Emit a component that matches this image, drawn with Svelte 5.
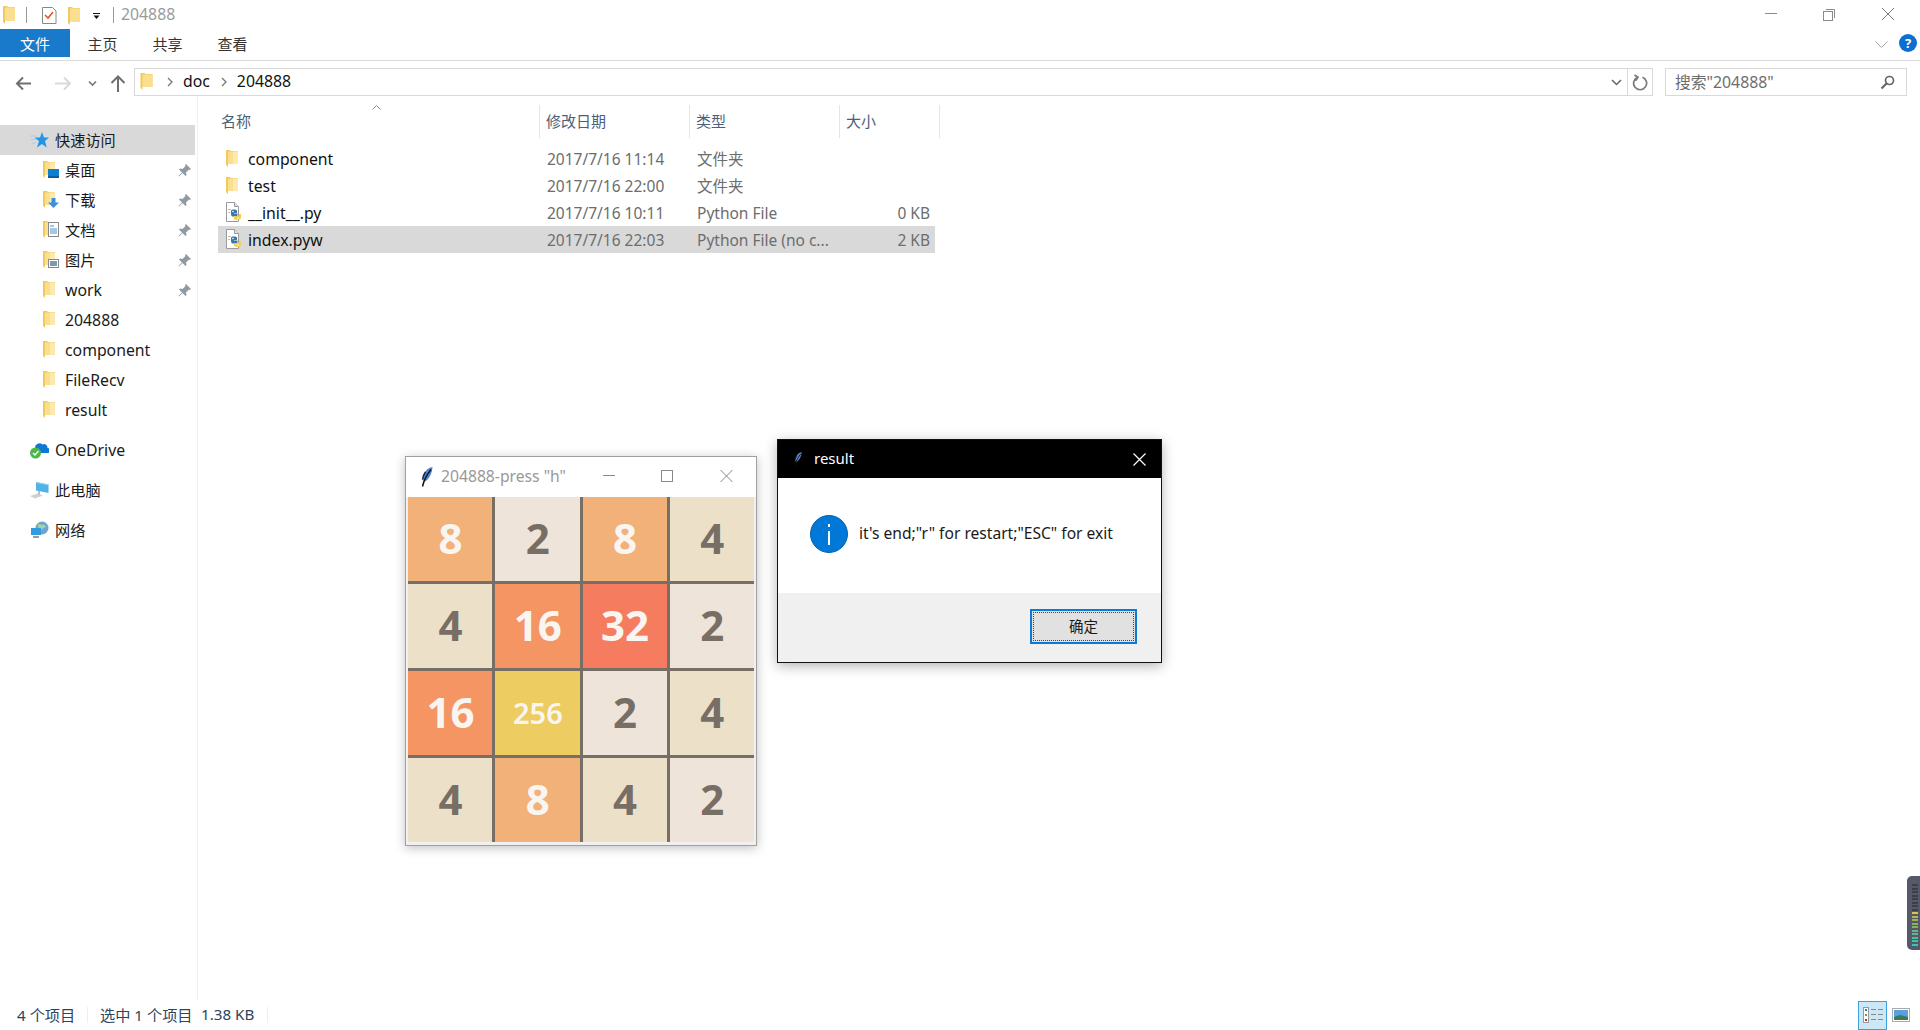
<script>
  const board = [8,2,8,4, 4,16,32,2, 16,256,2,4, 4,8,4,2];
  const files = [
    { name: 'component', date: '2017/7/16 11:14', type: '文件夹', size: '', kind: 'folder' },
    { name: 'test', date: '2017/7/16 22:00', type: '文件夹', size: '', kind: 'folder' },
    { name: '__init__.py', date: '2017/7/16 10:11', type: 'Python File', size: '0 KB', kind: 'py' },
    { name: 'index.pyw', date: '2017/7/16 22:03', type: 'Python File (no c...', size: '2 KB', kind: 'py', selected: true }
  ];
  const quick = [
    { name: '桌面', overlay: 'desk', pin: true, zh: true },
    { name: '下载', overlay: 'down', pin: true, zh: true },
    { name: '文档', overlay: 'doc', pin: true, zh: true },
    { name: '图片', overlay: 'pic', pin: true, zh: true },
    { name: 'work', pin: true },
    { name: '204888' },
    { name: 'component' },
    { name: 'FileRecv' },
    { name: 'result' }
  ];
</script>

{#snippet folder()}
  <svg class="folder" width="12" height="18" viewBox="0 0 12 18">
    <path d="M0 0h4l1 1h7v13H2v3l-2-2z" fill="#f2c95c"/>
    <path d="M2 1.500h10V14H2z" fill="#fbdf90"/>
    <path d="M7 1.500h5V14H7z" fill="#fde8ae"/>
  </svg>
{/snippet}

{#snippet feather(w, h)}
  <svg width={w} height={h} viewBox="0 0 12 20">
    <path d="M11.500 0C6 .5 2 6 1.500 13l2.500 1.500C8 12 11 7 11.500 0z" fill="#4f86cc"/>
    <path d="M9 3C6.500 6 5 9 4 12" stroke="#a9c8ec" stroke-width="1" fill="none"/>
    <path d="M10 2.500C7 6 3.500 11 1.500 19.500" stroke="#111" stroke-width="1.500" fill="none"/>
    <path d="M1.500 12.500C2 9 3 7 4.500 5" stroke="#16264a" stroke-width="1.500" fill="none"/>
  </svg>
{/snippet}

{#snippet pyfile()}
  <svg class="fileicon" width="16" height="21" viewBox="0 0 16 21">
    <path d="M.5.500h8l4 4v15H.5z" fill="#fff" stroke="#9a9a9a"/>
    <path d="M8.500.500v4h4" fill="#e6e6e6" stroke="#9a9a9a"/>
    <rect x="2" y="7" width="3" height="1" fill="#bbb"/><rect x="2" y="10" width="2" height="1" fill="#bbb"/>
    <path d="M5 12V9c0-1 1-1.500 3-1.500s3 .5 3 1.500v2H8v.5h3.500V13c0 1-1 1.500-2 1.500H7c-1 0-2-.5-2-2.500z" fill="#3b77a8"/>
    <path d="M15 12v3c0 2-1 3-3.500 3S8 17 8 16v-2h3.500c1 0 1.500-.5 1.500-2z" fill="#f7cf47"/>
    <circle cx="12" cy="16" r=".8" fill="#fff"/><circle cx="7" cy="9.500" r=".8" fill="#fff"/>
  </svg>
{/snippet}

{#snippet pin()}
  <svg class="pin" width="13" height="13" viewBox="0 0 13 13">
    <path d="M8 0l5 5-1 1-1-.5L8 8.500 8.500 11 7.500 12 4.500 9 1 12.500.5 12 4 8.500 1 5.500l1-1 2.500.5 3-3L7 1z" fill="#8f9aa3"/>
  </svg>
{/snippet}

<div class="explorer">
  <header class="titlebar">
    <svg class="qat" width="105" height="29" viewBox="0 0 105 29">
      <path d="M3 6h4l1 1h7v14H5v3l-2-2z" fill="#f2c95c"/><rect x="5" y="7.500" width="10" height="13.500" fill="#fbdf90"/>
      <rect x="26" y="7" width="1" height="16" fill="#999"/>
      <path d="M42.500 7.500h10l3.500 3.500v12.500H42.500z" fill="#fff" stroke="#888"/>
      <path d="M45 15l3 3 5-6" stroke="#e8541e" stroke-width="1.600" fill="none"/>
      <path d="M68 7h4l1 1h7v14H70v3l-2-2z" fill="#f2c95c"/><rect x="70" y="8.500" width="10" height="13.500" fill="#fbdf90"/>
      <rect x="93" y="13" width="7" height="1" fill="#111"/><path d="M93.500 15.500h6L96.500 19z" fill="#111"/>
    </svg>
    <span class="sep"></span>
    <span class="wintitle">204888</span>
    <svg class="winctl" width="136" height="29" viewBox="0 0 136 29">
      <rect x="6" y="13" width="12" height="1" fill="#8a8a8a"/>
      <rect x="64.500" y="11.500" width="9" height="9" fill="none" stroke="#8a8a8a"/>
      <path d="M67 9.500h8.500V18" fill="none" stroke="#8a8a8a"/>
      <path d="M123 8l12 12M135 8l-12 12" stroke="#7a7a7a" stroke-width="1" fill="none"/>
    </svg>
  </header>

  <nav class="tabs">
    <span class="tab file">文件</span>
    <span class="tab">主页</span>
    <span class="tab">共享</span>
    <span class="tab">查看</span>
    <svg class="collapse" width="13" height="8" viewBox="0 0 13 8"><path d="M.5.500l6 6 6-6" stroke="#a5a5a5" fill="none"/></svg>
    <span class="help">?</span>
  </nav>

  <div class="addrrow">
    <svg class="navbtns" width="134" height="28" viewBox="0 0 134 28">
      <path d="M31 15.500H18M23 9.500l-6 6 6 6" stroke="#6f6f6f" stroke-width="2" fill="none"/>
      <path d="M55 15.500h14M64 9.500l6 6-6 6" stroke="#d9d9d9" stroke-width="2" fill="none"/>
      <path d="M89 13.500l3.500 3.500 3.500-3.500" stroke="#777" stroke-width="1.600" fill="none"/>
      <path d="M118 24V9M111.500 15l6.500-6.500 6.500 6.500" stroke="#6f6f6f" stroke-width="2" fill="none"/>
    </svg>
    <div class="addr">
      <svg class="addrfolder" width="13" height="18" viewBox="0 0 12 18"><path d="M0 0h4l1 1h7v13H2v3l-2-2z" fill="#f2c95c"/><path d="M2 1.500h10V14H2z" fill="#fbdf90"/></svg>
      <svg class="crumb first" width="6" height="10" viewBox="0 0 6 10"><path d="M1 1l4 4-4 4" stroke="#777" stroke-width="1.300" fill="none"/></svg>
      <span class="crumbtext">doc</span>
      <svg class="crumb" width="6" height="10" viewBox="0 0 6 10"><path d="M1 1l4 4-4 4" stroke="#777" stroke-width="1.300" fill="none"/></svg>
      <span class="crumbtext">204888</span>
      <svg class="drop" width="11" height="7" viewBox="0 0 11 7"><path d="M1 1l4.500 4.500L10 1" stroke="#666" stroke-width="1.500" fill="none"/></svg>
      <span class="refresh">
        <svg width="16" height="17" viewBox="0 0 16 17"><path d="M5.500 3.300a6.500 6.500 0 1 0 5-.1M2.500 1l3.500 2.300-2.500 3.500" stroke="#7a7a7a" stroke-width="1.700" fill="none"/></svg>
      </span>
    </div>
    <div class="search">
      <span class="crumbtext">搜索"204888"</span>
      <svg width="15" height="15" viewBox="0 0 15 15"><circle cx="9.500" cy="5.500" r="4" stroke="#666" stroke-width="1.700" fill="none"/><path d="M6.500 8.500L1.500 13.500" stroke="#666" stroke-width="2.200"/></svg>
    </div>
  </div>

  <div class="body">
    <aside class="sidebar">
      <div class="tree top sel">
        <svg width="19" height="17" viewBox="0 0 19 17"><path d="M12 0l2 5.500h5l-4 3.500 1.700 6.500L12 12l-5 3.500L9 9 4.500 5.500H10z" fill="#2296e6"/><path d="M0 4h6M1 7.500h5M2 11h4" stroke="#9fd0f2"/></svg>
        <span class="ttext">快速访问</span>
      </div>
      {#each quick as q}
        <div class="tree sub">
          <span class="ficon">
            {@render folder()}
            {#if q.overlay === 'desk'}
              <svg class="ov" width="11" height="9" viewBox="0 0 11 9"><rect width="11" height="9" fill="#0e7fd0"/><rect y="7" width="11" height="2" fill="#0a5ea0"/></svg>
            {:else if q.overlay === 'down'}
              <svg class="ov" width="11" height="10" viewBox="0 0 11 10"><path d="M3.500 0h4v4.500H11L5.500 10 0 4.500h3.500z" fill="#3d8fdc"/></svg>
            {:else if q.overlay === 'doc'}
              <svg class="ov doc" width="11" height="15" viewBox="0 0 11 15"><rect x=".5" y=".5" width="10" height="14" fill="#fff" stroke="#888"/><path d="M2 4h4M2 7h7M2 9h7M2 11h7" stroke="#4a90c8"/></svg>
            {:else if q.overlay === 'pic'}
              <svg class="ov" width="11" height="9" viewBox="0 0 11 9"><rect x=".5" y=".5" width="10" height="8" fill="#fff" stroke="#888"/><rect x="2" y="2" width="7" height="5" fill="#7b9bb5"/></svg>
            {/if}
          </span>
          <span class="tname" class:zh={q.zh}>{q.name}</span>
          {#if q.pin}{@render pin()}{/if}
        </div>
      {/each}
      <div class="tree top group">
        <svg width="19" height="18" viewBox="0 0 19 18"><path d="M5 7a4.500 4.500 0 0 1 7.500-3.500 3.500 3.500 0 0 1 5 3.500 2.500 2.500 0 0 1 0 5H7z" fill="#0f78d4"/><circle cx="5.500" cy="12" r="5.500" fill="#4cb848"/><path d="M3 12l2 2 3.500-4" stroke="#fff" stroke-width="1.300" fill="none"/></svg>
        <span class="latin">OneDrive</span>
      </div>
      <div class="tree top group">
        <svg width="19" height="18" viewBox="0 0 19 18"><path d="M6 1l12.500 2.500v8.500L6 9.500z" fill="#4fb3ea"/><path d="M6 1l12.500 2.500v1L6 2z" fill="#8ccff2"/><path d="M0 15l8-2.500 5 2-8 3z" fill="#d0d0d0"/><path d="M9 10v3.500" stroke="#aaa" stroke-width="1.500"/></svg>
        <span class="ttext">此电脑</span>
      </div>
      <div class="tree top group">
        <svg width="19" height="18" viewBox="0 0 19 18"><circle cx="12" cy="7" r="6.500" fill="#6ba6cf"/><path d="M8 3c3 1 7 0 8 2-2 3-5 2-5 5-2 0-3-4-3-7z" fill="#a7d3a0"/><rect x="1" y="7" width="10" height="7" fill="#2f9be0"/><path d="M3 16h6" stroke="#9a9a9a" stroke-width="2"/></svg>
        <span class="ttext">网络</span>
      </div>
    </aside>

    <main class="main">
      <div class="colhead">
        <svg class="sort" width="9" height="5" viewBox="0 0 9 5"><path d="M.5 4.500l4-4 4 4" stroke="#8a8a8a" fill="none"/></svg>
        <span class="hname">名称</span>
        <span>修改日期</span>
        <span>类型</span>
        <span class="hlast">大小</span>
      </div>
      {#each files as f}
        <div class="row" class:selected={f.selected}>
          <span class="name">
            {#if f.kind === 'folder'}
              <span class="rowfolder">{@render folder()}</span>
            {:else}
              {@render pyfile()}
            {/if}
            {f.name}
          </span>
          <span class="meta">{f.date}</span>
          <span class="meta">{f.type}</span>
          <span class="meta size">{f.size}</span>
        </div>
      {/each}
    </main>
  </div>

  <footer class="status">
    <span class="count st">4 个项目</span>
    <span class="vsep"></span>
    <span class="picked st">选中 1 个项目</span>
    <span class="bytes st">1.38 KB</span>
    <span class="vsep"></span>
    <span class="viewbtn active">
      <svg width="20" height="16" viewBox="0 0 20 16">
        <rect x=".5" y=".5" width="5" height="15" fill="#fff" stroke="#999"/>
        <rect x="2" y="2" width="2" height="2" fill="#3d7ea6"/><rect x="2" y="7" width="2" height="2" fill="#a0892c"/><rect x="2" y="12" width="2" height="2" fill="#b5321f"/>
        <path d="M8 2.500h5M15 2.500h5M8 7.500h5M15 7.500h5M8 12.500h5M15 12.500h5" stroke="#888"/>
      </svg>
    </span>
    <span class="viewbtn">
      <svg width="18" height="14" viewBox="0 0 18 14"><rect x=".5" y=".5" width="17" height="13" fill="#fff" stroke="#aaa"/><rect x="2" y="2" width="14" height="10" fill="#5aa0e0"/><path d="M2 9l6-2 8 2v3H2z" fill="#3f7a58"/></svg>
    </span>
  </footer>
</div>

<section class="game">
  <div class="gtitle">
    <span class="gicon">{@render feather(12, 20)}</span>
    <span class="gname">204888-press "h"</span>
    <svg class="gctl" width="128" height="14" viewBox="0 0 128 14">
      <rect x="-1" y="6" width="12" height="1" fill="#888"/>
      <rect x="57.500" y="1.500" width="11" height="11" fill="none" stroke="#888"/>
      <path d="M116.500 1l12 12M128.500 1l-12 12" stroke="#888" fill="none"/>
    </svg>
  </div>
  <div class="board">
    {#each board as n}
      <div class="cell v{n}">{n}</div>
    {/each}
  </div>
</section>

<section class="dialog">
  <div class="dtitle">
    <span class="dicon">{@render feather(8, 14)}</span>
    <span class="dname">result</span>
    <svg class="dclose" width="13" height="13" viewBox="0 0 13 13"><path d="M.5.500l12 12M12.500.500l-12 12" stroke="#fff" stroke-width="1.200"/></svg>
  </div>
  <div class="dbody">
    <svg width="38" height="38" viewBox="0 0 38 38"><circle cx="19" cy="19" r="18.500" fill="#0078d7" stroke="#0062b0"/><rect x="18" y="16" width="2" height="14" fill="#fff"/><rect x="18" y="9" width="2" height="3" fill="#fff"/></svg>
    <span class="dmsg">it's end;"r" for restart;"ESC" for exit</span>
  </div>
  <div class="dfoot"><span class="okbtn"><span class="okin">确定</span></span></div>
</section>

<div class="meter">
  {#each ['#3b4048','#3b4048','#3b4048','#3b4048','#3b4048','#3b4048','#3b4048','#3b4048','#d6c83f','#b9b552','#a5ad55','#8fae62','#7cb36e','#68b878','#56bd88','#48c096','#3fc4a4','#3ac8ae'] as c}
    <i style="background:{c}"></i>
  {/each}
</div>

<style>
  :global(body) { margin: 0; background: #fff; overflow: hidden; }
  :global(#app) { font-family: "Noto Sans", "Noto Sans CJK SC", sans-serif; font-size: 15px; color: #1a1a1a; }
  svg { display: block; flex: none; }

  .explorer { height: 1030px; display: flex; flex-direction: column; background: #fff; }

  .titlebar { height: 29px; display: flex; align-items: center; flex: none; }
  .qat { margin-right: 8px; }
  .sep { width: 1px; height: 16px; background: #999; margin-right: 7px; }
  .wintitle { color: #9a9a9a; flex: 1; font-size: 15.800px; margin-bottom: 2px; }
  .winctl { margin-right: 25px; }

  .tabs { height: 31px; flex: none; display: flex; align-items: flex-start; border-bottom: 1px solid #dadada; }
  .tab { width: 65px; height: 28px; line-height: 30px; text-align: center; color: #333; }
  .tab.file { width: 70px; background: #1979ca; color: #fff; }
  .collapse { margin: 12px 11px 0 auto; }
  .help { width: 18px; height: 18px; margin: 5px 3px 0 0; border-radius: 50%; background: #0c6fd0; color: #fff; font-weight: 700; font-size: 13px; line-height: 18px; text-align: center; }

  .addrrow { height: 28px; margin-top: 7px; flex: none; display: flex; }
  .addr { width: 1519px; box-sizing: border-box; border: 1px solid #d9d9d9; display: flex; align-items: center; padding-left: 5px; color: #111; }
  .addrfolder { margin-right: 14px; }
  .crumbtext { font-size: 15.800px; margin-bottom: 2px; }
  .crumb { margin-right: 10px; }
  .addr span + .crumb { margin-left: 11px; margin-right: 10px; }
  .drop { margin-left: auto; margin-right: 5px; }
  .refresh { width: 24px; height: 100%; margin-right: 0; border-left: 1px solid #d9d9d9; display: flex; align-items: center; justify-content: center; }
  .search { width: 242px; margin-left: 12px; box-sizing: border-box; border: 1px solid #d9d9d9; display: flex; align-items: center; justify-content: space-between; padding: 0 11px 0 9px; color: #6d6d6d; }

  .body { flex: 1; display: flex; min-height: 0; }
  .sidebar { width: 197px; border-right: 1px solid #f0f0f0; padding-top: 29px; flex: none; }
  .tree { height: 30px; display: flex; align-items: center; margin-right: 2px; }
  .tree.top { padding-left: 30px; gap: 6px; }
  .tree.sel { background: #d9d9d9; }
  .tree.group { margin-top: 10px; }
  .tree.sub { padding-left: 43px; }
  .ttext { margin-bottom: 2px; font-size: 15.200px; }
  .latin { font-size: 15.800px; }
  .tname { flex: 1; font-size: 15.800px; }
  .tname.zh { font-size: 15.200px; margin-bottom: 2px; }
  .ficon { position: relative; width: 22px; display: block; }
  .ov { position: absolute; left: 5px; bottom: 1px; }
  .ov.doc { left: 5px; bottom: 2px; }
  .pin { margin-right: 4px; }

  .main { margin-left: 20px; padding-top: 9px; width: 722px; }
  .colhead { position: relative; height: 32px; display: grid; grid-template-columns: 322px 150px 150px 100px; margin-bottom: 8px; color: #4c607a; font-size: 15px; }
  .colhead span { border-right: 1px solid #e5e5e5; line-height: 33px; padding-left: 6px; }
  .colhead span.hname { padding-left: 3px; }
  .sort { position: absolute; left: 154px; top: 0; }
  .row { height: 27px; width: 717px; display: grid; grid-template-columns: 321px 150px 150px 96px; align-items: center; }
  .row.selected { background: #d9d9d9; }
  .name { display: flex; align-items: center; padding-left: 8px; color: #111; font-size: 15.800px; }
  .rowfolder { margin-right: 10px; display: block; }
  .fileicon { margin-right: 6px; }
  .meta { padding-left: 8px; color: #6d6d6d; font-size: 15.500px; white-space: nowrap; }
  .size { padding: 0 5px 0 0; text-align: right; }

  .status { height: 30px; flex: none; display: flex; align-items: center; color: #2c4460; font-size: 15.200px; }
  .st { margin-bottom: 2px; }
  .count { margin-left: 17px; width: 70px; }
  .vsep { width: 1px; height: 16px; background: #eee; }
  .picked { margin-left: 12px; width: 101px; }
  .bytes { width: 66px; }
  .viewbtn { width: 29px; height: 29px; box-sizing: border-box; display: flex; align-items: center; justify-content: center; }
  .viewbtn.active { margin-left: auto; margin-right: 3px; border: 1px solid #3ba0dc; background: #cce8f7; }
  .viewbtn:last-child { margin-right: 8px; width: 22px; }

  .game { position: absolute; left: 405px; top: 456px; width: 352px; height: 390px; box-sizing: border-box; border: 1px solid #a0a0a0; background: #f0f0f0; box-shadow: 0 2px 10px rgba(0,0,0,.25); padding: 0 2px 2px; }
  .gtitle { height: 40px; margin: 0 -2px; background: #fff; display: flex; align-items: center; position: relative; }
  .gicon { margin-left: 15px; }
  .gname { margin-left: 8px; color: #999; font-size: 15.700px; margin-bottom: 3px; }
  .gctl { position: absolute; left: 198px; top: 12px; overflow: visible; }
  .board { width: 346px; height: 345px; display: grid; grid-template-columns: repeat(4, 1fr); grid-template-rows: repeat(4, 1fr); gap: 3px; background: #776e65; }
  .cell { display: flex; align-items: center; justify-content: center; font-weight: 700; font-size: 42px; line-height: 1; color: #776e65; padding: 0 0 2px 1px; }
  .v2 { background: #eee4da; }
  .v4 { background: #ede0c8; }
  .v8 { background: #f2b179; color: #f9f6f2; }
  .v16 { background: #f59563; color: #f9f6f2; }
  .v32 { background: #f67c5f; color: #f9f6f2; }
  .v256 { background: #edcc61; color: #f9f6f2; font-size: 29px; font-weight: 600; }

  .dialog { position: absolute; left: 777px; top: 439px; width: 385px; height: 224px; box-sizing: border-box; border: 1px solid #111; background: #fff; box-shadow: 0 3px 12px rgba(0,0,0,.3); display: flex; flex-direction: column; }
  .dtitle { height: 38px; flex: none; background: #000; color: #fff; display: flex; align-items: center; position: relative; }
  .dicon { margin: 0 12px 0 16px; }
  .dname { margin-bottom: 2px; }
  .dclose { position: absolute; right: 15px; top: 13px; }
  .dbody { height: 115px; flex: none; display: flex; align-items: center; padding: 0 0 3px 32px; gap: 11px; color: #1a1a1a; box-sizing: border-box; }
  .dmsg { font-size: 15.600px; margin-bottom: 2px; }
  .dfoot { flex: 1; background: #f0f0f0; display: flex; justify-content: flex-end; padding: 16px 24px 0 0; }
  .okbtn { width: 107px; height: 35px; box-sizing: border-box; border: 2px solid #0a7ad8; background: #e1e1e1; padding: 1px; }
  .okin { display: block; height: 100%; box-sizing: border-box; border: 1px dotted #444; text-align: center; line-height: 27px; font-size: 14.500px; }

  .meter { position: absolute; right: 0; top: 876px; width: 13px; height: 74px; box-sizing: border-box; background: #55596a; border-radius: 5px 0 0 5px; padding: 8px 0 0 5px; display: flex; flex-direction: column; gap: 1.500px; }
  .meter i { display: block; width: 6px; height: 2px; }
</style>
